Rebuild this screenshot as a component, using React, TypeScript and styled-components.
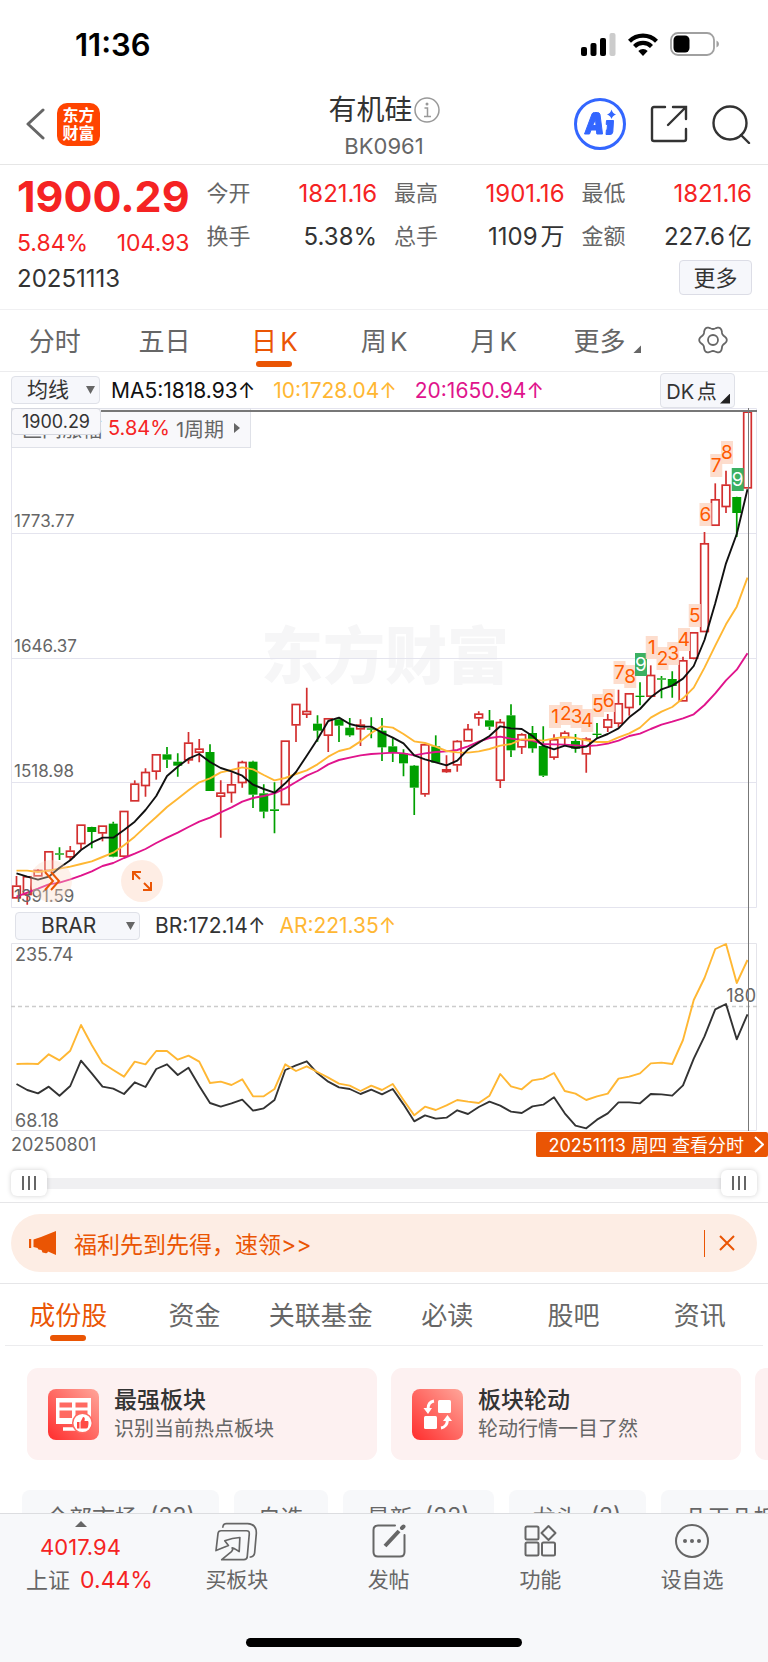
import React from "react";
import styled, { createGlobalStyle, css } from "styled-components";

const RED = "#f52323";
const ORANGE = "#ea5504";
const AMBER = "#ffb733";
const MAGENTA = "#e0148c";
const GREY = "#666666";
const INK = "#333333";
const UP = "#d32f2f";
const DOWN = "#00a000";
const FONT = '"Inter", "Noto Sans CJK SC", sans-serif';

const GlobalStyle = createGlobalStyle`
  * { box-sizing: border-box; }
  body { margin: 0; background: #fff; font-family: ${FONT}; color: ${INK}; text-autospace: normal; }
  button, select, input { font-family: inherit; margin: 0; }
  button { border: 0; padding: 0; background: none; color: inherit; cursor: pointer; text-autospace: inherit; }
  a { color: inherit; text-decoration: none; }
  svg { display: block; flex-shrink: 0; }
`;

/* ---------- page frame ---------- */

const Page = styled.div`
  display: flex;
  flex-direction: column;
  height: 100vh;
  min-width: 700px;
  overflow: hidden;
`;

const Body = styled.main`
  flex: 1;
  min-height: 0;
  overflow: hidden;
`;

const StatusBar = styled.div`
  display: flex;
  justify-content: space-between;
  align-items: center;
  height: 88px;
  padding: 0 48px 0 75px;
  font-size: 31px;
  font-weight: 600;
  color: #000;
`;

const StatusIcons = styled.div`
  display: flex;
  align-items: center;
  gap: 12px;
`;

const Header = styled.header`
  display: grid;
  grid-template-columns: 1fr auto 1fr;
  align-items: center;
  height: 77px;
  padding: 0 17px;
  border-bottom: 1px solid #e6e6e6;
`;

const HeaderSide = styled.div<{ $end?: boolean }>`
  display: flex;
  align-items: center;
  gap: ${(p) => (p.$end ? 24 : 11)}px;
  padding: 0 0 4px 8px;
  justify-content: ${(p) => (p.$end ? "flex-end" : "flex-start")};
`;

const Logo = styled.a`
  display: flex;
  flex-direction: column;
  align-items: center;
  justify-content: center;
  width: 43px;
  height: 43px;
  border-radius: 10px;
  background: #ff4400;
  color: #fff;
  font-size: 16px;
  line-height: 18px;
  font-weight: 700;
`;

const TitleBlock = styled.div`
  display: flex;
  flex-direction: column;
  align-items: center;
  padding-top: 4px;
`;

const Title = styled.h1`
  display: flex;
  align-items: center;
  margin: 0;
  font-size: 28px;
  line-height: 36px;
  font-weight: 400;
  svg { margin-left: 1px; }
`;

const Code = styled.div`
  font-size: 22px;
  line-height: 36px;
  color: ${GREY};
`;

/* ---------- quote ---------- */

const Quote = styled.section`
  display: grid;
  grid-template-columns: repeat(4, 1fr);
  column-gap: 17px;
  padding: 4px 16px 14px 17px;
  border-bottom: 1px solid #f0f0f2;
`;

const PriceColumn = styled.div`
  display: flex;
  flex-direction: column;
  white-space: nowrap;
`;

const Price = styled.div`
  font-size: 43px;
  line-height: 54px;
  font-weight: 700;
  color: ${RED};
`;

const Change = styled.div`
  display: flex;
  justify-content: space-between;
  font-size: 23px;
  line-height: 40px;
  color: ${RED};
`;

const QuoteDate = styled.div`
  font-size: 24px;
  line-height: 32px;
`;

const StatColumn = styled.div`
  display: flex;
  flex-direction: column;
  padding-top: 3px;
`;

const Stat = styled.div<{ $red?: boolean }>`
  display: flex;
  justify-content: space-between;
  font-size: 24px;
  line-height: 43px;
  white-space: nowrap;
  color: ${(p) => (p.$red ? RED : INK)};
`;

const StatLabel = styled.span`
  font-size: 22px;
  color: ${GREY};
`;

const MoreButton = styled.button`
  align-self: flex-end;
  width: 73px;
  height: 35px;
  margin-top: 2px;
  border: 1px solid #dcdde6;
  border-radius: 4px;
  background: #f6f7fb;
  font-size: 22px;
  line-height: 30px;
`;

/* ---------- tabs ---------- */

const Tabs = styled.nav<{ $columns: number; $inset?: number }>`
  display: grid;
  grid-template-columns: repeat(${(p) => p.$columns}, 1fr);
  height: 62px;
  margin: 0 ${(p) => p.$inset ?? 0}px;
  border-bottom: 1px solid #ececee;
`;

const Tab = styled.button<{ $active?: boolean }>`
  position: relative;
  display: flex;
  align-items: center;
  justify-content: center;
  gap: 8px;
  padding-bottom: 2px;
  font-size: 26px;
  white-space: nowrap;
  color: ${(p) => (p.$active ? ORANGE : GREY)};
  ${(p) =>
    p.$active &&
    css`
      &::after {
        content: "";
        position: absolute;
        left: calc(50% - 18px);
        bottom: 4px;
        width: 36px;
        height: 6px;
        border-radius: 3px;
        background: ${ORANGE};
      }
    `}
`;

const MenuTab = styled(Tab)`
  padding-left: 8px;
`;

const Corner = styled.i<{ $size: number }>`
  width: ${(p) => p.$size}px;
  height: ${(p) => p.$size}px;
  background: currentColor;
  clip-path: polygon(100% 0, 100% 100%, 0 100%);
`;

const TabCorner = styled(Corner)`
  align-self: flex-end;
  margin-bottom: 16px;
`;

/* ---------- charts ---------- */

const Charts = styled.section`
  position: relative;
  margin: 0 11px;
`;

const IndicatorRow = styled.div<{ $height: number; $indent?: number }>`
  display: flex;
  align-items: center;
  height: ${(p) => p.$height}px;
  padding-left: ${(p) => p.$indent ?? 0}px;
  font-size: 21px;
  white-space: nowrap;
`;

const SelectBox = styled.label<{ $width: number }>`
  position: relative;
  width: ${(p) => p.$width}px;
  height: 28px;
  svg { position: absolute; right: 5px; top: 10px; pointer-events: none; }
`;

const Select = styled.select<{ $indent: number }>`
  appearance: none;
  width: 100%;
  height: 28px;
  padding: 0 0 0 ${(p) => p.$indent}px;
  border: 1px solid #dfe1e8;
  border-radius: 4px;
  background: #f6f7fb;
  color: ${INK};
  font-size: 21px;
  line-height: 26px;
`;

const Indicator = styled.span<{ $color: string; $gap: number }>`
  margin-left: ${(p) => p.$gap}px;
  color: ${(p) => p.$color};
`;

const DkButton = styled.button`
  position: relative;
  width: 75px;
  height: 35px;
  margin: 0 22px 0 auto;
  padding-right: 12px;
  border: 1px solid #dfe1e8;
  border-radius: 4px;
  background: #f6f7fb;
  font-size: 20px;
  ${Corner} { position: absolute; right: 4px; bottom: 3px; color: #222; }
`;

const Plot = styled.div`
  position: relative;
  > svg { width: 100%; height: auto; }
`;

const Summary = styled.button`
  position: absolute;
  left: 0;
  top: 0;
  display: flex;
  align-items: center;
  gap: 6px;
  height: 40px;
  padding: 0 10px 0 10px;
  border: 1px solid #dfe1e8;
  background: #f8f8fb;
  color: ${GREY};
  font-size: 20px;
  white-space: nowrap;
  text-autospace: no-autospace;
  em { font-style: normal; color: ${RED}; }
  svg { margin-left: 4px; }
`;

const PriceTag = styled.div`
  position: absolute;
  left: 0;
  top: 0;
  width: 90px;
  height: 27px;
  border: 1px solid #d4d6de;
  border-radius: 4px;
  background: #f8f8fb;
  font-size: 18px;
  line-height: 26px;
  text-align: center;
`;

const RoundButton = styled.button<{ $left: number; $faint?: boolean }>`
  position: absolute;
  left: ${(p) => p.$left}px;
  bottom: 6px;
  display: flex;
  align-items: center;
  justify-content: center;
  width: 42px;
  height: 42px;
  border-radius: 50%;
  background: rgba(253, 215, 196, ${(p) => (p.$faint ? 0.35 : 0.45)});
  svg { width: 22px; height: 22px; }
`;

const CrossHairX = styled.div`
  position: absolute;
  left: 90px;
  right: 0;
  top: 2px;
  height: 2px;
  background: #777;
`;

const CrossHairY = styled.div`
  position: absolute;
  top: 36px;
  bottom: 26px;
  right: 8px;
  width: 1px;
  background: #777;
`;

const DateRow = styled.div`
  display: flex;
  justify-content: space-between;
  align-items: center;
  height: 26px;
  margin-right: -11px;
  font-size: 18px;
  color: ${GREY};
`;

const DayLink = styled.a`
  display: flex;
  align-items: center;
  gap: 10px;
  height: 25px;
  padding: 0 4px 0 13px;
  border-radius: 2px;
  background: ${ORANGE};
  color: #fff;
  white-space: pre;
`;

const RangeBar = styled.div`
  display: grid;
  align-items: center;
  height: 45px;
  padding-top: 7px;
  margin: 0 11px;
  background: linear-gradient(#f0f0f2, #f0f0f2) 0 21px / 100% 11px no-repeat;
`;

const Thumb = styled.input`
  grid-area: 1 / 1;
  appearance: none;
  width: 100%;
  height: 26px;
  background: none;
  pointer-events: none;
  &::-webkit-slider-thumb {
    appearance: none;
    width: 36px;
    height: 26px;
    border-radius: 6px;
    pointer-events: auto;
    background:
      linear-gradient(${GREY}, ${GREY}) 11px 6px / 2px 14px no-repeat,
      linear-gradient(${GREY}, ${GREY}) 17px 6px / 2px 14px no-repeat,
      linear-gradient(${GREY}, ${GREY}) 23px 6px / 2px 14px no-repeat,
      #fff;
    box-shadow: 0 0 5px rgba(0, 0, 0, 0.18);
  }
`;

/* ---------- banner ---------- */

const BannerArea = styled.section`
  padding: 11px;
  border-top: 1px solid #e6e6e8;
  border-bottom: 1px solid #e6e6e8;
`;

const Banner = styled.div`
  display: flex;
  align-items: center;
  height: 58px;
  padding: 0 22px 0 18px;
  border-radius: 29px;
  background: #fdede4;
  color: ${ORANGE};
  font-size: 23px;
`;

const BannerLink = styled.a`
  display: flex;
  align-items: center;
  gap: 18px;
  flex: 1;
`;

const Close = styled.button`
  padding-left: 14px;
  height: 27px;
  border-left: 1px solid ${ORANGE};
`;

/* ---------- cards and chips ---------- */

const Cards = styled.section`
  display: flex;
  gap: 14px;
  padding: 22px 0 30px 27px;
  overflow: hidden;
`;

const Card = styled.a`
  display: flex;
  align-items: center;
  gap: 15px;
  flex: 0 0 350px;
  height: 92px;
  padding: 0 21px;
  border-radius: 11px;
  background: #fdf1f1;
`;

const CardTitle = styled.div`
  font-size: 23px;
  line-height: 30px;
  font-weight: 500;
`;

const CardNote = styled.div`
  font-size: 20px;
  line-height: 28px;
  color: ${GREY};
`;

const Chips = styled.section`
  display: flex;
  gap: 15px;
  padding-left: 22px;
  overflow: hidden;
`;

const Chip = styled.button`
  display: flex;
  align-items: center;
  gap: 12px;
  flex: none;
  height: 52px;
  padding: 0 24px;
  border-radius: 8px;
  background: #f7f8fa;
  color: ${GREY};
  font-size: 23px;
`;

/* ---------- bottom bar ---------- */

const Dock = styled.footer`
  height: 149px;
  border-top: 1px solid #dcdde0;
  background: #f7f8fa;
`;

const DockItems = styled.nav`
  display: grid;
  grid-template-columns: 161px repeat(4, 1fr);
  height: 124px;
  padding-top: 7px;
`;

const DockItem = styled.button`
  display: flex;
  flex-direction: column;
  align-items: center;
  gap: 3px;
  height: 76px;
  font-size: 21px;
  line-height: 32px;
  color: ${GREY};
`;

const IconSlot = styled.span`
  display: flex;
  align-items: center;
  height: 40px;
`;

const IndexItem = styled(DockItem)`
  gap: 0;
  white-space: nowrap;
  font-size: 22px;
  em { font-style: normal; font-size: 23px; color: ${RED}; }
  strong { margin-top: 4px; font-size: 22px; font-weight: 400; line-height: 33px; color: ${RED}; }
`;

const IndexLine = styled.span`
  display: flex;
  gap: 10px;
  padding-left: 18px;
`;

const HomeBar = styled.div`
  width: 36%;
  height: 9px;
  margin: 0 auto;
  border-radius: 5px;
  background: #000;
`;

/* ---------- chart data ---------- */

type Candle = ["u" | "d", number, number, number, number];

/* kind, high, body top, body bottom, low */
const candles: Candle[] = [
  ["u", 828, 857, 895, 895], ["u", 828, 829, 885, 914], ["u", 808, 810, 829, 829],
  ["u", 754, 754, 813, 813], ["d", 742, 760, 764, 780], ["u", 738, 752, 772, 783],
  ["u", 674, 674, 732, 748], ["d", 680, 681, 696, 745], ["u", 677, 677, 700, 724],
  ["d", 665, 671, 770, 772], ["u", 633, 633, 770, 770], ["u", 541, 551, 604, 604],
  ["u", 505, 516, 558, 590], ["u", 463, 463, 515, 539], ["d", 441, 463, 479, 504],
  ["d", 460, 485, 497, 530], ["u", 396, 428, 481, 491], ["u", 417, 446, 458, 487],
  ["d", 433, 456, 573, 573], ["u", 541, 578, 590, 713], ["u", 517, 553, 579, 608],
  ["u", 482, 486, 549, 563], ["d", 482, 485, 584, 624], ["d", 553, 580, 635, 655],
  ["d", 547, 628, 633, 700], ["u", 422, 422, 615, 615], ["u", 312, 312, 376, 426],
  ["u", 263, 333, 344, 354], ["d", 346, 371, 392, 425], ["u", 355, 355, 407, 456],
  ["d", 352, 358, 377, 426], ["d", 354, 383, 406, 410], ["u", 358, 374, 388, 438],
  ["d", 352, 385, 389, 415], ["d", 354, 392, 442, 483], ["d", 415, 439, 459, 486],
  ["d", 448, 460, 490, 529], ["d", 495, 497, 563, 645], ["u", 433, 433, 583, 590],
  ["d", 406, 439, 488, 488], ["u", 466, 508, 516, 518], ["u", 421, 423, 496, 515],
  ["u", 372, 387, 424, 424], ["u", 334, 341, 355, 377], ["d", 330, 361, 380, 390],
  ["u", 357, 366, 542, 564], ["d", 313, 346, 451, 471], ["u", 400, 403, 442, 462],
  ["d", 378, 399, 445, 458], ["d", 379, 438, 527, 531], ["u", 403, 418, 473, 479],
  ["u", 392, 398, 414, 433], ["d", 402, 423, 446, 458], ["u", 412, 416, 463, 518],
  ["d", 369, 401, 405, 415], ["u", 342, 358, 383, 396], ["u", 269, 310, 371, 382],
  ["u", 280, 280, 324, 347], ["d", 247, 287, 291, 316], ["u", 196, 225, 290, 290],
  ["d", 228, 235, 239, 295], ["d", 214, 237, 258, 293], ["u", 170, 181, 304, 304],
  ["u", 97, 97, 176, 178], ["u", -204, -170, 96, 96], ["u", -350, -302, -223, -223],
  ["u", -388, -346, -279, -261], ["d", -310, -309, -261, -189], ["u", -565, -565, -335, -335],
];

const ma5 = [
  820, 830, 839, 830, 803, 781, 750, 728, 713, 713, 690, 665, 630, 588, 528, 500, 476, 462, 486,
  504, 514, 527, 554, 567, 578, 550, 516, 467, 418, 363, 353, 372, 380, 380, 398, 413, 430, 466,
  478, 487, 496, 482, 448, 428, 408, 379, 385, 387, 408, 437, 448, 437, 444, 440, 415, 402, 385,
  352, 327, 292, 268, 257, 236, 198, 120, 10, -110, -198, -332,
];

const ma10 = [
  812, 812, 816, 812, 806, 800, 792, 784, 771, 758, 736, 710, 680, 651, 621, 596, 571, 547, 535,
  517, 510, 502, 508, 525, 541, 534, 522, 511, 493, 470, 453, 445, 424, 399, 379, 383, 402, 424,
  429, 440, 453, 457, 458, 454, 447, 437, 432, 418, 419, 422, 415, 411, 414, 421, 426, 426, 412,
  400, 383, 353, 335, 321, 295, 263, 203, 137, 73, 20, -67,
];

const ma20 = [
  890, 878, 866, 853, 848, 838, 827, 814, 798, 789, 774, 761, 747, 729, 713, 698, 681, 665, 653,
  637, 622, 605, 594, 588, 580, 565, 546, 527, 513, 493, 480, 473, 466, 462, 460, 458, 460, 466,
  460, 456, 454, 450, 439, 425, 414, 410, 416, 420, 422, 432, 433, 434, 436, 438, 436, 431, 422,
  408, 401, 387, 374, 365, 355, 343, 315, 280, 241, 209, 160,
];

const brLine = [
  552, 570, 580, 560, 587, 558, 482, 520, 560, 566, 582, 547, 561, 507, 493, 525, 503, 558, 609,
  620, 610, 599, 632, 625, 600, 510, 496, 484, 520, 545, 562, 567, 582, 569, 583, 567, 613, 664,
  646, 656, 653, 631, 642, 621, 605, 617, 635, 639, 619, 614, 592, 640, 677, 685, 659, 640, 607,
  607, 610, 582, 583, 587, 556, 476, 409, 328, 312, 418, 343,
];

const arLine = [
  492, 491, 492, 463, 481, 452, 375, 435, 489, 510, 530, 485, 493, 453, 453, 479, 467, 485, 549,
  545, 555, 538, 589, 589, 567, 493, 513, 499, 516, 533, 551, 557, 573, 557, 570, 552, 600, 646,
  620, 630, 616, 600, 605, 609, 587, 522, 559, 568, 541, 536, 519, 573, 581, 600, 589, 581, 536,
  530, 520, 490, 488, 492, 420, 300, 234, 147, 132, 249, 180,
];

/* candle index, digit, top edge of its tile */
const signals: [number, number, number][] = [
  [50, 1, 297], [51, 2, 294], [52, 3, 297], [53, 4, 301], [54, 5, 286], [55, 6, 281],
  [56, 7, 253], [57, 8, 257], [58, 9, 245], [59, 1, 228], [60, 2, 239], [61, 3, 234],
  [62, 4, 220], [63, 5, 196], [64, 6, 95], [65, 7, 46], [66, 8, 33], [67, 9, 60],
];

/* series are stored in thirds of a chart unit */
const xAt = (i: number) => 5.5 + i * 10.75;
const priceY = (v: number) => 192 + v / 3;
const brarY = (v: number) => v / 3 - 43;
const points = (values: number[], y: (v: number) => number) =>
  values.map((v, i) => `${xAt(i).toFixed(2)},${y(v).toFixed(2)}`).join(" ");

const axis = { fontSize: 17, fill: GREY, fontFamily: FONT };

function CandleChart() {
  return (
    <svg viewBox="0 0 746 500" role="img" aria-label="日K">
      <text x="374" y="271" fontSize="62" fontWeight="900" fill="#f6f6f7" textAnchor="middle" fontFamily='"Noto Sans CJK SC", sans-serif'>
        东方财富
      </text>
      <g stroke="#e4e4ee" strokeWidth="1">
        <path d="M.5 .5H745.5V499.5H.5Z" fill="none" />
        <path d="M0 125.5H746M0 250.5H746M0 374.5H746" />
      </g>
      {candles.map(([kind, high, top, bottom, low], i) => {
        const x = xAt(i);
        const color = kind === "u" ? UP : DOWN;
        const t = priceY(top);
        const b = priceY(bottom);
        return (
          <g key={i} stroke={color} strokeWidth="1.7">
            <path d={`M${x} ${priceY(high)}V${t}M${x} ${b}V${priceY(low)}`} />
            {kind === "u" ? (
              <rect x={x - 3.8} y={t + 0.5} width="7.6" height={Math.max(b - t - 1, 1)} fill="#fff" />
            ) : (
              <rect x={x - 4.5} y={t} width="9" height={b - t} fill={color} stroke="none" />
            )}
          </g>
        );
      })}
      <g fill="none" strokeWidth="1.9" strokeLinejoin="round">
        <polyline points={points(ma20, priceY)} stroke={MAGENTA} />
        <polyline points={points(ma10, priceY)} stroke={AMBER} />
        <polyline points={points(ma5, priceY)} stroke="#111" />
      </g>
      {signals.map(([i, digit, top]) => (
        <g key={i}>
          <rect x={xAt(i) - 5} y={top} width="12" height="23" fill={digit === 9 ? "#3bb062" : "#fdd9c8"} fillOpacity={digit === 9 ? 1 : 0.9} />
          <text x={xAt(i) + 1} y={top + 18} fontSize="19" textAnchor="middle" fontFamily={FONT} fill={digit === 9 ? "#fff" : "#ff5a00"}>
            {digit}
          </text>
        </g>
      ))}
      <g {...axis}>
        <text x="3" y="119">1773.77</text>
        <text x="3" y="244">1646.37</text>
        <text x="3" y="369">1518.98</text>
        <text x="3" y="494">1391.59</text>
      </g>
    </svg>
  );
}

function BrarChart() {
  return (
    <svg viewBox="0 0 746 188" role="img" aria-label="BRAR">
      <path d="M.5 .5H745.5V187.5H.5Z" fill="none" stroke="#e4e4ea" />
      <path d="M0 63.5H746" stroke="#ccc" strokeWidth="1.5" strokeDasharray="4 3" />
      <g fill="none" strokeWidth="1.9" strokeLinejoin="round">
        <polyline points={points(brLine, brarY)} stroke="#333" />
        <polyline points={points(arLine, brarY)} stroke={AMBER} />
      </g>
      <g {...axis} fontSize="18">
        <text x="4" y="18">235.74</text>
        <text x="4" y="184">68.18</text>
        <text x="745" y="59" textAnchor="end">180</text>
      </g>
    </svg>
  );
}

/* ---------- icons ---------- */

const line = { fill: "none", stroke: GREY, strokeWidth: 2, strokeLinecap: "round", strokeLinejoin: "round" } as const;

const Caret = () => (
  <svg width="9" height="8" viewBox="0 0 9 8"><path d="M0 0H9L4.5 8Z" fill={GREY} /></svg>
);

const gearPath =
  Array.from({ length: 73 }, (_, k) => {
    const a = (k * Math.PI) / 36;
    const r = 12.4 + 1.4 * Math.cos(6 * a);
    return `${k ? "L" : "M"}${(15 + r * Math.cos(a)).toFixed(2)} ${(15 + r * Math.sin(a)).toFixed(2)}`;
  }).join("") + "Z";

const Gear = () => (
  <svg width="30" height="30" viewBox="0 0 30 30" {...line} strokeWidth={1.8}>
    <path d={gearPath} />
    <circle cx="15" cy="15" r="5" />
  </svg>
);

const Signal = () => (
  <svg width="35" height="23" viewBox="0 0 35 23">
    <rect x="0" y="14" width="6" height="9" rx="2" />
    <rect x="9.5" y="10" width="6" height="13" rx="2" />
    <rect x="19" y="5" width="6" height="18" rx="2" />
    <rect x="28.5" y="0" width="6" height="23" rx="2" fill="#ccc" />
  </svg>
);

const Wifi = () => (
  <svg width="30" height="23" viewBox="0 0 30 23" fill="none" stroke="#000" strokeWidth="4.2">
    <path d="M1.5 8.3A19 19 0 0 1 28.5 8.3" />
    <path d="M6.5 13.5A12 12 0 0 1 23.5 13.5" />
    <path d="M15 23L10.3 18A6.8 6.8 0 0 1 19.7 18Z" fill="#000" stroke="none" />
  </svg>
);

const Battery = () => (
  <svg width="50" height="24" viewBox="0 0 50 24">
    <rect x="1" y="1" width="43" height="22" rx="7" fill="none" stroke="#a0a0a0" strokeWidth="1.8" />
    <rect x="3.5" y="3.5" width="16" height="17" rx="4.5" />
    <path d="M46.5 8.5Q49 9.5 49 12T46.5 15.5Z" fill="#a0a0a0" />
  </svg>
);

const AiBadge = () => (
  <svg width="52" height="52" viewBox="0 0 52 52">
    <circle cx="26" cy="26" r="24.5" fill="none" stroke="#3366ff" strokeWidth="3" />
    <g fill="#3366ff" stroke="#3366ff" strokeLinejoin="round">
      <path d="M10.5 36L18 16Q18.5 14.5 20.5 14.5H23.5Q25.5 14.5 26 16.5L28.5 36H22.8L22.4 32H17L15.5 36ZM18.7 27.5H22L21.5 21.5Z" fillRule="evenodd" />
      <path d="M32.5 22.5H39.5L38.8 34Q38.5 36.5 36 36.5H32L32.4 32H33L33.5 26.5H32.2Z" />
    </g>
    <path d="M37.5 11.5Q38.5 15.5 42 16.5Q38.5 17.5 37.5 21Q36.5 17.5 33 16.5Q36.5 15.5 37.5 11.5Z" fill="#3366ff" />
  </svg>
);

const Share = () => (
  <svg width="38" height="38" viewBox="0 0 38 38" fill="none" stroke="#333" strokeWidth="2.4" strokeLinecap="round">
    <path d="M15 2H4Q2 2 2 4V34Q2 36 4 36H34Q36 36 36 34V24" />
    <path d="M23 2H36V14M36 2L18 20" />
  </svg>
);

const Search = () => (
  <svg width="39" height="39" viewBox="0 0 39 39" fill="none" stroke="#333" strokeWidth="2.4" strokeLinecap="round">
    <circle cx="18" cy="18" r="16.5" />
    <path d="M29 30L37 38" />
  </svg>
);

const Megaphone = () => (
  <svg width="27" height="24" viewBox="0 0 27 24" fill={ORANGE}>
    <rect x="0" y="8" width="2.2" height="9" />
    <path d="M4.5 8.5L12 6L27 0V24L19 20.5Q18.5 23 16 22L13.5 21.5L12.5 19L9.5 18.5L8.5 17L4.5 16Z" />
  </svg>
);

const Expand = () => (
  <svg viewBox="0 0 22 22" fill="none" stroke={ORANGE} strokeWidth="2">
    <path d="M2 10V2H10M2 2L9 9M12 20H20V12M20 20L13 13" />
  </svg>
);

const Forward = () => (
  <svg viewBox="0 0 22 22" fill="none" stroke={ORANGE} strokeWidth="2">
    <path d="M5 2L13 11L5 20M11 2L19 11L11 20" />
  </svg>
);

const RankIcon = () => (
  <svg width="51" height="51" viewBox="0 0 51 51">
    <defs>
      <linearGradient id="tile" x1="0" y1="1" x2="1" y2="0">
        <stop offset="0" stopColor="#ff2d2d" />
        <stop offset="1" stopColor="#ffa69a" />
      </linearGradient>
    </defs>
    <rect width="51" height="51" rx="8" fill="url(#tile)" />
    <path d="M8 9H43V29H27V35H8Z" fill="#fff" />
    <path d="M11.5 13.5H24V18.5H11.5ZM27.5 13.5H39.5V18.5H27.5ZM11.5 21.5H24V29H11.5ZM27.5 21.5H39.5V27H27.5Z" fill="#ff6a62" />
    <path d="M15 40H28" stroke="#fff" strokeWidth="3.5" />
    <circle cx="34.5" cy="34" r="9.8" fill="#fff" stroke="#ff6a62" strokeWidth="1.5" />
    <path d="M29 33H31.5V39.5H29ZM32.5 33L35 28Q37.5 28 36.5 32H40Q41 33 40 38Q39.5 39.5 38 39.5H32.5Z" fill="#ff4a44" />
  </svg>
);

const RotateIcon = () => (
  <svg width="51" height="51" viewBox="0 0 51 51">
    <rect width="51" height="51" rx="8" fill="url(#tile)" />
    <rect x="26" y="11" width="13" height="13" rx="1.5" fill="#fff" />
    <rect x="12" y="27" width="13" height="13" rx="1.5" fill="#fff" />
    <path d="M22 12Q16 13 16 20" fill="none" stroke="#fff" strokeWidth="3" />
    <path d="M11.5 19H20L16 25Z" fill="#fff" />
    <path d="M29 39Q35 38 35.5 31" fill="none" stroke="#fff" strokeWidth="3" />
    <path d="M31 32H40L35.5 26Z" fill="#fff" />
  </svg>
);

const BuyIcon = () => (
  <svg width="43" height="39" viewBox="648 126 128 116" fill="none" stroke={GREY} strokeWidth="5" strokeLinejoin="round">
    <path d="M671 143Q672 131 682 131H745Q772 132 771 160L766 218Q765 229 751 231" />
    <path d="M651 211L657 160Q658 152 666 152H742Q751 152 750 162L744 229Q743 238 734 238H668L697 214Q703 208 699 203L707 206L720 214L722 172Q700 173 677 182L688 196Z" />
  </svg>
);

const PostIcon = () => (
  <svg width="34" height="34" viewBox="0 0 34 34" {...line}>
    <path d="M23 1.5H6Q1.5 1.5 1.5 6V28Q1.5 32.5 6 32.5H28Q32.5 32.5 32.5 28V11" />
    <path d="M13 22L27 7" strokeWidth="4" strokeLinecap="butt" />
    <path d="M30 4L31.5 2.5" strokeWidth="4" />
  </svg>
);

const GridIcon = () => (
  <svg width="33" height="34" viewBox="0 0 33 34" {...line}>
    <rect x="1.5" y="2.5" width="13" height="13" rx="1.5" />
    <rect x="1.5" y="18.5" width="13" height="13" rx="1.5" />
    <rect x="18" y="18.5" width="13" height="13" rx="1.5" />
    <path d="M24.5 2L31.5 9L24.5 16L17.5 9Z" />
  </svg>
);

const DotsIcon = () => (
  <svg width="34" height="34" viewBox="0 0 34 34" {...line}>
    <circle cx="17" cy="17" r="16" />
    <g fill={GREY} stroke="none">
      <circle cx="10" cy="17" r="2" /><circle cx="17" cy="17" r="2" /><circle cx="24" cy="17" r="2" />
    </g>
  </svg>
);

/* ---------- app ---------- */

const periods = ["分时", "五日", "日K", "周K", "月K"];
const sections = ["成份股", "资金", "关联基金", "必读", "股吧", "资讯"];
const chips: [string, string?][] = [["全部市场", "(22)"], ["自选"], ["最新", "(22)"], ["龙头", "(2)"], ["几天几板"]];
const actions: [string, React.ReactNode][] = [
  ["买板块", <BuyIcon />],
  ["发帖", <PostIcon />],
  ["功能", <GridIcon />],
  ["设自选", <DotsIcon />],
];

export default function App() {
  return (
    <Page>
      <GlobalStyle />
      <Body>
        <StatusBar>
          <span>11:36</span>
          <StatusIcons><Signal /><Wifi /><Battery /></StatusIcons>
        </StatusBar>

        <Header>
          <HeaderSide>
            <button aria-label="返回">
              <svg width="21" height="32" viewBox="0 0 21 32" {...line} strokeWidth={3}><path d="M18 2L3 16L18 30" /></svg>
            </button>
            <Logo href="#"><span>东方</span><span>财富</span></Logo>
          </HeaderSide>
          <TitleBlock>
            <Title>
              有机硅
              <svg width="26" height="26" viewBox="0 0 26 26" fill="none" stroke="#999" strokeWidth="1.5">
                <circle cx="13" cy="13" r="12" />
                <path d="M10.5 11H13.5V19M10 19.5H17" />
                <circle cx="13" cy="7" r="1.5" fill="#999" stroke="none" />
              </svg>
            </Title>
            <Code>BK0961</Code>
          </TitleBlock>
          <HeaderSide $end>
            <button aria-label="Ai"><AiBadge /></button>
            <button aria-label="分享"><Share /></button>
            <button aria-label="搜索"><Search /></button>
          </HeaderSide>
        </Header>

        <Quote>
          <PriceColumn>
            <Price>1900.29</Price>
            <Change><span>5.84%</span><span>104.93</span></Change>
            <QuoteDate>20251113</QuoteDate>
          </PriceColumn>
          <StatColumn>
            <Stat $red><StatLabel>今开</StatLabel>1821.16</Stat>
            <Stat><StatLabel>换手</StatLabel>5.38%</Stat>
          </StatColumn>
          <StatColumn>
            <Stat $red><StatLabel>最高</StatLabel>1901.16</Stat>
            <Stat><StatLabel>总手</StatLabel>1109万</Stat>
          </StatColumn>
          <StatColumn>
            <Stat $red><StatLabel>最低</StatLabel>1821.16</Stat>
            <Stat><StatLabel>金额</StatLabel>227.6亿</Stat>
            <MoreButton>更多</MoreButton>
          </StatColumn>
        </Quote>

        <Tabs $columns={7}>
          {periods.map((name) => (
            <Tab key={name} $active={name === "日K"}>{name}</Tab>
          ))}
          <MenuTab>更多<TabCorner $size={8} /></MenuTab>
          <Tab aria-label="设置"><Gear /></Tab>
        </Tabs>

        <Charts>
          <IndicatorRow $height={36}>
            <SelectBox $width={89}>
              <Select $indent={15} aria-label="主图指标"><option>均线</option></Select>
              <Caret />
            </SelectBox>
            <Indicator $color="#111" $gap={11}>MA5:1818.93↑</Indicator>
            <Indicator $color={AMBER} $gap={18}>10:1728.04↑</Indicator>
            <Indicator $color={MAGENTA} $gap={18}>20:1650.94↑</Indicator>
            <DkButton>DK点<Corner $size={10} /></DkButton>
          </IndicatorRow>
          <Plot>
            <CandleChart />
            <Summary>
              <span>区间涨幅</span><em>5.84%</em><span>1周期</span>
              <svg width="6" height="10" viewBox="0 0 6 10"><path d="M0 0L6 5L0 10Z" fill={GREY} /></svg>
            </Summary>
            <CrossHairX />
            <PriceTag>1900.29</PriceTag>
            <RoundButton $left={19} $faint aria-label="前进"><Forward /></RoundButton>
            <RoundButton $left={110} aria-label="全屏"><Expand /></RoundButton>
          </Plot>
          <IndicatorRow $height={35} $indent={4}>
            <SelectBox $width={125}>
              <Select $indent={25} aria-label="副图指标"><option>BRAR</option></Select>
              <Caret />
            </SelectBox>
            <Indicator $color={INK} $gap={15}>BR:172.14↑</Indicator>
            <Indicator $color={AMBER} $gap={14}>AR:221.35↑</Indicator>
          </IndicatorRow>
          <Plot><BrarChart /></Plot>
          <DateRow>
            <span>20250801</span>
            <DayLink href="#">
              20251113 周四 查看分时
              <svg width="10" height="17" viewBox="0 0 10 17" fill="none" stroke="#fff" strokeWidth="2"><path d="M1 1L9 8.5L1 16" /></svg>
            </DayLink>
          </DateRow>
          <CrossHairY />
        </Charts>

        <RangeBar>
          <Thumb type="range" min="0" max="100" defaultValue="0" aria-label="起始" />
          <Thumb type="range" min="0" max="100" defaultValue="100" aria-label="结束" />
        </RangeBar>

        <BannerArea>
          <Banner>
            <BannerLink href="#"><Megaphone />福利先到先得，速领&gt;&gt;</BannerLink>
            <Close aria-label="关闭">
              <svg width="16" height="16" viewBox="0 0 16 16" stroke={ORANGE} strokeWidth="2"><path d="M1 1L15 15M15 1L1 15" /></svg>
            </Close>
          </Banner>
        </BannerArea>

        <Tabs $columns={6} $inset={5}>
          {sections.map((name) => (
            <Tab key={name} $active={name === "成份股"}>{name}</Tab>
          ))}
        </Tabs>

        <Cards>
          <Card href="#">
            <RankIcon />
            <div><CardTitle>最强板块</CardTitle><CardNote>识别当前热点板块</CardNote></div>
          </Card>
          <Card href="#">
            <RotateIcon />
            <div><CardTitle>板块轮动</CardTitle><CardNote>轮动行情一目了然</CardNote></div>
          </Card>
          <Card href="#" aria-label="更多板块" />
        </Cards>

        <Chips>
          {chips.map(([name, count]) => (
            <Chip key={name}>{name}{count && <span>{count}</span>}</Chip>
          ))}
        </Chips>
      </Body>

      <Dock>
        <DockItems>
          <IndexItem>
            <svg width="12" height="6" viewBox="0 0 12 6"><path d="M0 6L6 0L12 6Z" fill={GREY} /></svg>
            <strong>4017.94</strong>
            <IndexLine>上证<em>0.44%</em></IndexLine>
          </IndexItem>
          {actions.map(([name, icon]) => (
            <DockItem key={name}><IconSlot>{icon}</IconSlot>{name}</DockItem>
          ))}
        </DockItems>
        <HomeBar />
      </Dock>
    </Page>
  );
}
